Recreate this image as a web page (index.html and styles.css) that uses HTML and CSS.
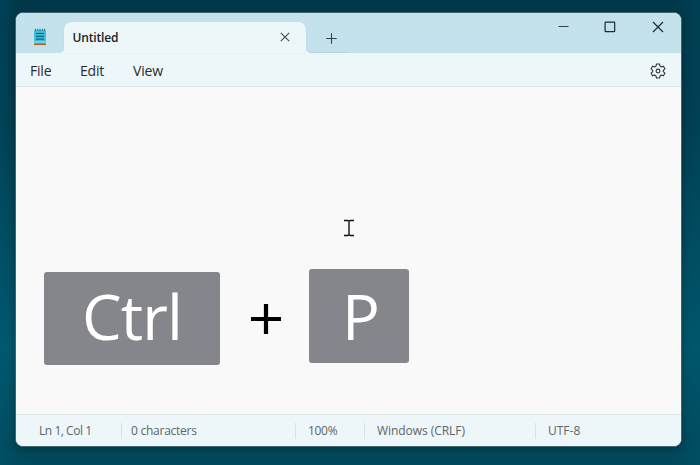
FILE: index.html
```html
<!DOCTYPE html>
<html lang="en">
<head>
<meta charset="utf-8">
<title>Untitled - Notepad</title>
<link rel="stylesheet" href="styles.css">
</head>
<body>
<main class="window">
  <header class="titlebar">
    <svg class="app-icon" width="14" height="18" viewBox="0 0 14 18">
      <rect x="1" y="2" width="12" height="14" rx="1" fill="#40bddb"/>
      <rect x="1" y="13" width="12" height="2" fill="#72d1e6"/>
      <rect x="1" y="15.6" width="12" height="1.5" fill="#b85f26"/>
      <path d="M2.5 .8v2M4.8 .8v2M7 .8v2M9.3 .8v2M11.5 .8v2" stroke="#24718a" stroke-width="1.1"/>
      <path d="M3 5.5h8M3 8.3h8M3 11.1h8" stroke="#0b6684" stroke-width="1.2"/>
    </svg>
    <div class="tab">
      <span class="tab-title">Untitled</span>
      <svg width="10" height="10" viewBox="0 0 10 10"><path d="M.8 .8l8.4 8.4M9.2 .8L.8 9.2" stroke="#3c4a50" stroke-width="1.1"/></svg>
    </div>
    <div class="new-tab">
      <svg width="11" height="11" viewBox="0 0 11 11"><path d="M5.5 .3v10.4M.3 5.5h10.4" stroke="#33434a" stroke-width="1.1"/></svg>
    </div>
    <div class="controls">
      <svg width="11" height="12" viewBox="0 0 11 12"><path d="M.5 5.5h10" stroke="#33434a" stroke-width="1"/></svg>
      <svg width="12" height="12" viewBox="0 0 12 12"><rect x="1.1" y="1.1" width="9.6" height="9.6" rx=".6" fill="none" stroke="#1c2a30" stroke-width="1.2"/></svg>
      <svg width="12" height="12" viewBox="0 0 12 12"><path d="M1 1l10 10M11 1L1 11" stroke="#1c2a30" stroke-width="1.2"/></svg>
    </div>
  </header>
  <nav class="menubar">
    <span class="file">File</span><span class="edit">Edit</span><span class="view">View</span>
    <svg class="gear" width="16" height="16" viewBox="0 0 16 16" fill="none" stroke="#36393b" stroke-width="1.15" stroke-linejoin="round">
      <path d="M6.5 1h3l.5 2.1 1.3.8 2.1-.7 1.5 2.6L13.3 7.3v1.4l1.6 1.5-1.5 2.6-2.1-.7-1.3.8-.5 2.1h-3L6 12.9l-1.3-.8-2.1.7-1.5-2.6 1.6-1.5V7.3L1.1 5.8l1.5-2.6 2.1.7L6 3.1z"/>
      <circle cx="8" cy="8" r="1.9"/>
    </svg>
  </nav>
  <section class="editor">
    <svg class="cursor" width="12" height="18" viewBox="0 0 12 18"><path d="M1 1.5h3.7l1.3.6 1.3-.6H11M6 2v14M1 16.5h3.7l1.3-.6 1.3.6H11" fill="none" stroke="#111" stroke-width="1.4"/></svg>
    <div class="shortcut">
      <div class="key ctrl"><span>Ctrl</span></div>
      <svg class="plus" width="32" height="32" viewBox="0 0 32 32"><path d="M16 1v30M1 16h30" stroke="#000" stroke-width="4.2"/></svg>
      <div class="key p"><span>P</span></div>
    </div>
  </section>
  <footer class="statusbar">
    <span class="position">Ln 1, Col 1</span>
    <span class="count">0 characters</span>
    <span class="zoom">100%</span>
    <span class="ending">Windows (CRLF)</span>
    <span class="encoding">UTF-8</span>
  </footer>
</main>
</body>
</html>
```
FILE: styles.css
```css
* { box-sizing: border-box; }
svg { display: block; flex: none; }
body {
  margin: 0;
  width: 700px;
  height: 465px;
  padding: 12px 18px 18px 15px;
  overflow: hidden;
  font-family: "Open Sans", "Noto Sans", sans-serif;
  background:
    linear-gradient(90deg, rgba(0, 99, 126, .22), transparent 3%, transparent 96%, rgba(0, 86, 110, .25)),
    linear-gradient(#00384a 0%, #003a4c 25%, #00566c 75%, #00495c 95%, #00495c 100%);
}
.window {
  width: 667px;
  height: 435px;
  display: flex;
  flex-direction: column;
  overflow: hidden;
  border: 1px solid #42666f;
  border-radius: 8px;
  background: #f9f9f9;
  box-shadow: 0 2px 7px rgba(0, 25, 35, .4);
}
.titlebar {
  height: 40px;
  flex: none;
  display: flex;
  align-items: flex-start;
  background: #c4e2eb;
}
.app-icon { margin: 15px 0 0 17px; }
.tab {
  position: relative;
  width: 242px;
  height: 31px;
  margin: 9px 0 0 17px;
  padding: 0 16px 0 8.5px;
  display: flex;
  align-items: center;
  justify-content: space-between;
  border-radius: 7px 7px 0 0;
  background: #edf6f9;
  box-shadow: 0 0 1px #a7c5ce;
}
.tab::before, .tab::after {
  content: "";
  position: absolute;
  bottom: 0;
  width: 4px;
  height: 4px;
}
.tab::before { left: -4px; background: radial-gradient(circle at 0 0, transparent 3.5px, #edf6f9 4px); }
.tab::after { right: -4px; background: radial-gradient(circle at 100% 0, transparent 3.5px, #edf6f9 4px); }
.tab-title { font-size: 12px; line-height: 18px; font-weight: 600; letter-spacing: -.15px; color: #1c2225; }
.tab svg { margin-top: -1px; }
.new-tab { width: 42px; height: 40px; padding: 20px 0 0 20px; border-bottom: 1px solid #b6d7e1; }
.controls { margin: 8px 17px 0 auto; display: flex; gap: 36px; }
.controls svg:first-child { margin-right: -1px; }
.menubar {
  height: 34px;
  flex: none;
  display: flex;
  align-items: center;
  padding: 3px 15px 0 14px;
  border-bottom: 1px solid #d8e8ec;
  background: #edf6f9;
  font-size: 14px;
  line-height: 20px;
  letter-spacing: -.2px;
  color: #272b2d;
}
.file { width: 50px; }
.edit { width: 53px; }
.gear { margin-left: auto; }
.editor { flex: 1; padding: 132px 0 0 28px; }
.cursor { margin-left: 299px; }
.shortcut { display: flex; align-items: flex-start; margin-top: 32px; }
.key {
  display: flex;
  justify-content: center;
  border-radius: 3px;
  background: #85868b;
  color: #fff;
  font-size: 63px;
  line-height: 86px;
}
.ctrl { width: 176px; height: 93px; margin-top: 3px; padding-top: 1px; letter-spacing: -1px; }
.p { width: 100px; height: 94px; padding: 4px 0 0 4px; }
.plus { margin: 34px 27px 0 30px; }
.statusbar {
  height: 32px;
  flex: none;
  display: flex;
  align-items: center;
  padding-left: 23px;
  border-top: 1px solid #dce6ea;
  background: #edf6f9;
  color: #606568;
  font-size: 12px;
  line-height: 16px;
}
.statusbar span { white-space: nowrap; }
.position { width: 82px; letter-spacing: -.45px; }
.count { width: 174px; letter-spacing: -.25px; }
.zoom { width: 69px; letter-spacing: -.3px; }
.ending { width: 171px; letter-spacing: -.05px; }
.count, .zoom, .ending, .encoding {
  padding-left: 10px;
  background: linear-gradient(#d5e2e7, #d5e2e7) left / 1px 100% no-repeat;
}
.zoom, .ending, .encoding { padding-left: 13px; }
```
